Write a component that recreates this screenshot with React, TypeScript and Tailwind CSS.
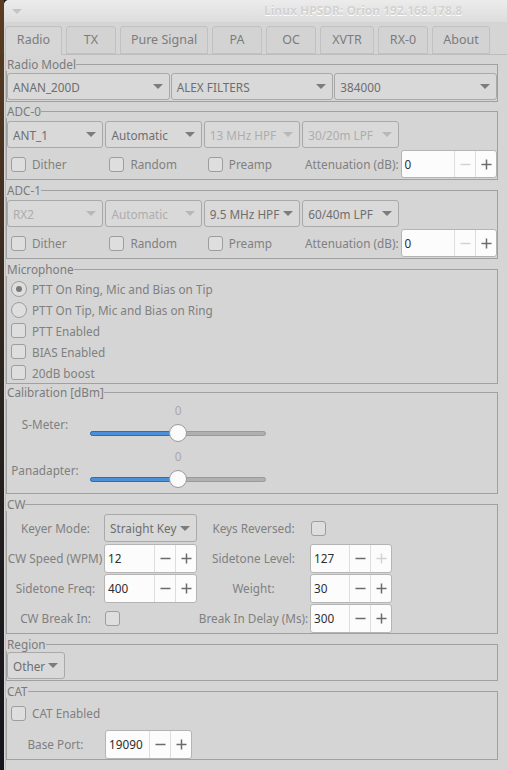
import React from 'react';

const LINE = 'border-[#a0a0a0]';

function Arrow({ disabled }: { disabled?: boolean }) {
  return (
    <span
      className={`w-0 h-0 shrink-0 border-x-[5px] border-x-transparent border-t-[5px] ${
        disabled ? 'border-t-[#b8b8b8]' : 'border-t-[#7c7c7c]'
      }`}
    />
  );
}

function Combo({ text, disabled, className = '' }: { text: string; disabled?: boolean; className?: string }) {
  return (
    <div
      className={`flex items-center justify-between h-[27px] pl-[5px] pr-[6px] gap-[3px] border border-[#a9a9a9] rounded-[3px] bg-[#d9d9d9] ${
        disabled ? 'text-[#adadad]' : 'text-[#6e6e6e]'
      } ${className}`}
    >
      <span className="whitespace-nowrap">{text}</span>
      <Arrow disabled={disabled} />
    </div>
  );
}

function Check() {
  return <span className="w-[15px] h-[15px] shrink-0 rounded-[3px] border border-[#9d9d9d] bg-[#dedede]" />;
}

function Radio({ on }: { on?: boolean }) {
  return (
    <span className="w-[16px] h-[16px] shrink-0 rounded-full border border-[#9d9d9d] bg-[#dedede] flex items-center justify-center">
      {on && <span className="w-[6px] h-[6px] rounded-full bg-[#7a7a7a]" />}
    </span>
  );
}

function Minus({ off }: { off?: boolean }) {
  return (
    <svg width="11" height="11" viewBox="0 0 11 11">
      <line x1="0.5" y1="5.5" x2="10.5" y2="5.5" stroke={off ? '#d2d2d2' : '#6b6b6b'} strokeWidth="1.5" />
    </svg>
  );
}

function Plus({ off }: { off?: boolean }) {
  const c = off ? '#d2d2d2' : '#6b6b6b';
  return (
    <svg width="11" height="11" viewBox="0 0 11 11">
      <line x1="0.5" y1="5.5" x2="10.5" y2="5.5" stroke={c} strokeWidth="1.5" />
      <line x1="5.5" y1="0.5" x2="5.5" y2="10.5" stroke={c} strokeWidth="1.5" />
    </svg>
  );
}

function Spin({
  value,
  className = '',
  minusOff,
  plusOff,
}: {
  value: string;
  className?: string;
  minusOff?: boolean;
  plusOff?: boolean;
}) {
  return (
    <div className={`flex h-[28px] border border-[#b4b4b4] rounded-[3px] bg-[#fcfcfc] overflow-hidden ${className}`}>
      <div className="flex-1 flex items-center pl-[3px] text-[#2e2e2e]">{value}</div>
      <div className="w-[21px] border-l border-[#dddddd] flex items-center justify-center">
        <Minus off={minusOff} />
      </div>
      <div className="w-[21px] border-l border-[#dddddd] flex items-center justify-center">
        <Plus off={plusOff} />
      </div>
    </div>
  );
}

function Frame({
  title,
  className = '',
  bodyClass = '',
  children,
}: {
  title: string;
  className?: string;
  bodyClass?: string;
  children: React.ReactNode;
}) {
  return (
    <div className={`w-[492px] ${className}`}>
      <div className="flex h-[14px]">
        <span className="pl-[1px] leading-[14px] text-[#7b7b7b] whitespace-nowrap">{title}</span>
        <div className={`flex-1 mt-[7px] border-t border-r ${LINE}`} />
      </div>
      <div className={`border-l border-r border-b ${LINE} ${bodyClass}`}>{children}</div>
    </div>
  );
}

function CheckItem({ label }: { label: string }) {
  return (
    <div className="flex items-center gap-[6px] pl-[4px] text-[#808080] whitespace-nowrap">
      <Check />
      <span>{label}</span>
    </div>
  );
}

function Slider() {
  return (
    <div className="relative w-[180px] h-[20px]">
      <div className="absolute left-[2px] right-[2px] top-[8px] h-[5px] rounded-full bg-[#b0b0b0] border border-[#9a9a9a]" />
      <div className="absolute left-[2px] w-[88px] top-[8px] h-[5px] rounded-full bg-[#4a8fd8] border border-[#2d6db3]" />
      <div className="absolute left-[81px] top-[1px] w-[18px] h-[18px] rounded-full bg-[#fbfbfb] border border-[#9a9a9a]" />
    </div>
  );
}

function Adc({
  title,
  combos,
  className,
}: {
  title: string;
  combos: { t: string; d?: boolean }[];
  className: string;
}) {
  return (
    <Frame title={title} className={className} bodyClass="pt-[3px] pb-[1px]">
      <div className="grid grid-cols-5 gap-x-[2px] gap-y-[2px]">
        {combos.map((c) => (
          <Combo key={c.t} text={c.t} disabled={c.d} />
        ))}
        <div />
        <div className="h-[28px] flex items-center">
          <CheckItem label="Dither" />
        </div>
        <div className="h-[28px] flex items-center">
          <CheckItem label="Random" />
        </div>
        <div className="h-[28px] flex items-center">
          <CheckItem label="Preamp" />
        </div>
        <div className="h-[28px] flex items-center justify-end text-[#808080] whitespace-nowrap">Attenuation (dB):</div>
        <Spin value="0" minusOff />
      </div>
    </Frame>
  );
}

const tabs = [
  { t: 'Radio', w: 'w-[57px]' },
  { t: 'TX', w: 'w-[50px]' },
  { t: 'Pure Signal', w: 'w-[88px]' },
  { t: 'PA', w: 'w-[50px]' },
  { t: 'OC', w: 'w-[50px]' },
  { t: 'XVTR', w: 'w-[54px]' },
  { t: 'RX-0', w: 'w-[50px]' },
  { t: 'About', w: 'w-[58px]' },
];

export default function App() {
  return (
    <div className="w-[507px] h-[770px] flex bg-[#1b1a22] font-['Noto_Sans',sans-serif] text-[11.75px] leading-[14px] overflow-hidden">
      <div className="w-[4px] bg-gradient-to-b from-[#5c3d22] via-[#2b241f] to-[#15151d]" />
      <div className="flex-1 flex flex-col bg-[#d5d5d5] rounded-tl-[5px]">
        {/* title bar */}
        <div className="h-[22px] flex items-center justify-between bg-gradient-to-b from-[#ececec] to-[#dddddd] rounded-tl-[5px]">
          <span className="ml-[8px] w-0 h-0 border-x-[5px] border-x-transparent border-t-[5px] border-t-[#c4c4c4]" />
          <span className="mr-[45px] font-bold text-[12px] text-[#d2d2d2] [text-shadow:0_1px_0_#ffffff]">
            Linux HPSDR: Orion 192.168.178.8
          </span>
        </div>

        {/* tabs */}
        <div className="flex items-end gap-[4px] h-[33px] pt-[4px] pl-[1px] border-b border-[#bdbdbd]">
          {tabs.map((tab, i) => (
            <div
              key={tab.t}
              className={`${tab.w} flex items-center justify-center rounded-t-[3px] border border-[#c1c1c1] text-[#7c7c7c] text-[12.5px] ${
                i === 0 ? 'h-[29px] -mb-[1px] border-b-0 bg-[#d6d6d6] pb-[2px]' : 'h-[28px] bg-[#d3d3d3]'
              }`}
            >
              {tab.t}
            </div>
          ))}
        </div>

        {/* notebook page */}
        <div className="flex-1 ml-[1px] border-l border-[#bdbdbd] flex flex-col">
          <Frame title="Radio Model" className="mt-[2px]" bodyClass="pt-[2px] pb-[1px]">
            <div className="grid grid-cols-3 gap-x-[1px]">
              <Combo text="ANAN_200D" />
              <Combo text="ALEX FILTERS" />
              <Combo text="384000" />
            </div>
          </Frame>

          <Adc
            title="ADC-0"
            className="mt-[2px]"
            combos={[{ t: 'ANT_1' }, { t: 'Automatic' }, { t: '13 MHz HPF', d: true }, { t: '30/20m LPF', d: true }]}
          />
          <Adc
            title="ADC-1"
            className="mt-[3px]"
            combos={[{ t: 'RX2', d: true }, { t: 'Automatic', d: true }, { t: '9.5 MHz HPF' }, { t: '60/40m LPF' }]}
          />

          <Frame title="Microphone" className="mt-[3px]" bodyClass="pt-[2px] text-[#808080]">
            <div className="h-[21px] flex items-center gap-[5px] pl-[4px]">
              <Radio on />
              <span>PTT On Ring, Mic and Bias on Tip</span>
            </div>
            <div className="h-[21px] flex items-center gap-[5px] pl-[4px]">
              <Radio />
              <span>PTT On Tip, Mic and Bias on Ring</span>
            </div>
            <div className="h-[21px] flex items-center">
              <CheckItem label="PTT Enabled" />
            </div>
            <div className="h-[21px] flex items-center">
              <CheckItem label="BIAS Enabled" />
            </div>
            <div className="h-[21px] flex items-center">
              <CheckItem label="20dB boost" />
            </div>
          </Frame>

          <Frame title="Calibration [dBm]" className="mt-[1px]" bodyClass="pt-[4px] pb-[4px] flex flex-col gap-[6px]">
            {['S-Meter:', 'Panadapter:'].map((l) => (
              <div key={l} className="flex items-start h-[40px]">
                <div className="w-[76px] pt-[14px] text-center text-[#808080]">{l}</div>
                <div className="ml-[5px] flex flex-col">
                  <div className="h-[20px] text-center text-[#a9a9a9]">0</div>
                  <Slider />
                </div>
              </div>
            ))}
          </Frame>

          <Frame title="CW" className="mt-[3px]" bodyClass="pt-[2px] text-[#808080]">
            <div className="grid grid-cols-[97px_93px_113px_82px] auto-rows-[30px] items-center">
              <div className="text-center whitespace-nowrap">Keyer Mode:</div>
              <Combo text="Straight Key" className="h-[28px]" />
              <div className="text-center whitespace-nowrap">Keys Reversed:</div>
              <div className="pl-[1px] flex">
                <Check />
              </div>

              <div className="text-center whitespace-nowrap -ml-[1px]">CW Speed (WPM)</div>
              <Spin value="12" className="h-[29px]" />
              <div className="text-center whitespace-nowrap">Sidetone Level:</div>
              <Spin value="127" className="h-[29px]" plusOff />

              <div className="text-center whitespace-nowrap">Sidetone Freq:</div>
              <Spin value="400" className="h-[29px]" />
              <div className="text-center whitespace-nowrap">Weight:</div>
              <Spin value="30" className="h-[29px]" />

              <div className="text-center whitespace-nowrap">CW Break In:</div>
              <div className="pl-[1px] flex">
                <Check />
              </div>
              <div className="text-center whitespace-nowrap">Break In Delay (Ms):</div>
              <Spin value="300" className="h-[29px]" />
            </div>
          </Frame>

          <Frame title="Region" className="mt-[3px]" bodyClass="pt-[1px] pb-[1px]">
            <Combo text="Other" className="w-[58px]" />
          </Frame>

          <Frame title="CAT" className="mt-[3px]" bodyClass="pt-[5px] text-[#808080]">
            <div className="h-[20px] flex items-center">
              <CheckItem label="CAT Enabled" />
            </div>
            <div className="mt-[6px] flex items-center h-[30px]">
              <div className="w-[97px] text-center">Base Port:</div>
              <Spin value="19090" className="w-[87px] ml-[1px] h-[29px]" />
            </div>
          </Frame>
        </div>
      </div>
    </div>
  );
}
